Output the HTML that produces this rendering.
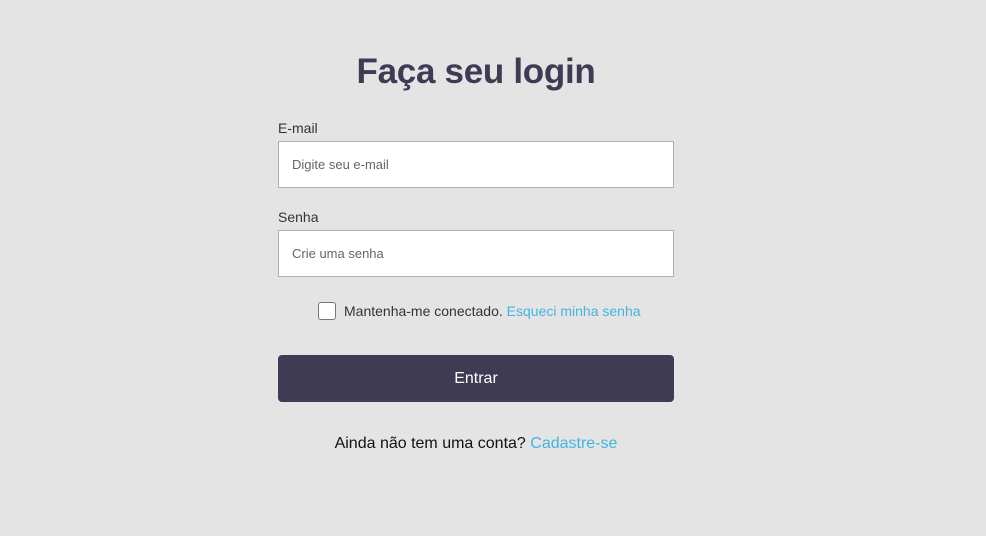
<!DOCTYPE html>
<html><head><meta charset="utf-8"><style>
*{box-sizing:border-box;margin:0;padding:0}
html,body{width:986px;height:536px;background:#e4e4e4;font-family:"Liberation Sans",Arial,sans-serif;overflow:hidden;position:relative}
h1{position:absolute;left:0;width:952px;text-align:center;top:52px;font-size:35px;font-weight:bold;color:#3f3b54;letter-spacing:-0.3px}
.lbl{position:absolute;left:278px;font-size:14px;color:#333}
.inp{position:absolute;left:278px;width:396px;height:47px;background:#fff;border:1px solid #b0b0b0;font-size:13px;color:#666;padding-left:13px;line-height:45px}
.cb{position:absolute;left:318px;top:302px;width:18px;height:18px;border:1px solid #777;border-radius:3px;background:#fff}
.t{position:absolute;font-size:14px;color:#333;white-space:nowrap}
.link{color:#43b5e0}
.btn{position:absolute;left:278px;top:355px;width:396px;height:47px;background:#3f3b54;border-radius:4px;color:#fff;font-size:16px;text-align:center;line-height:47px}
</style></head><body>
<h1>Faça seu login</h1>
<div class="lbl" style="top:120px">E-mail</div>
<div class="inp" style="top:141px">Digite seu e-mail</div>
<div class="lbl" style="top:209px">Senha</div>
<div class="inp" style="top:230px">Crie uma senha</div>
<div class="cb"></div>
<div class="t" style="left:344px;top:303px">Mantenha-me conectado. <span class="link">Esqueci minha senha</span></div>
<div class="btn">Entrar</div>
<div class="t" style="left:0;width:952px;text-align:center;top:435px;font-size:16px;color:#111">Ainda não tem uma conta? <span class="link">Cadastre-se</span></div>
</body></html>
